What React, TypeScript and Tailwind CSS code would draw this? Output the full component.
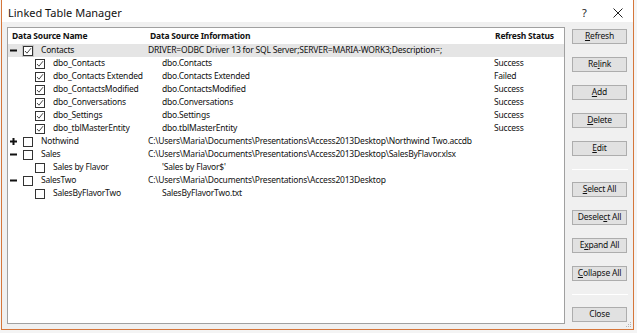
import React from "react";

type Row = {
  name: string;
  level: 0 | 1;
  exp?: "-" | "+";
  checked: boolean;
  info: string;
  status?: string;
  hl?: boolean;
};

const rows: Row[] = [
  { name: "Contacts", level: 0, exp: "-", checked: true, info: "DRIVER=ODBC Driver 13 for SQL Server;SERVER=MARIA-WORK3;Description=;", hl: true },
  { name: "dbo_Contacts", level: 1, checked: true, info: "dbo.Contacts", status: "Success" },
  { name: "dbo_Contacts Extended", level: 1, checked: true, info: "dbo.Contacts Extended", status: "Failed" },
  { name: "dbo_ContactsModified", level: 1, checked: true, info: "dbo.ContactsModified", status: "Success" },
  { name: "dbo_Conversations", level: 1, checked: true, info: "dbo.Conversations", status: "Success" },
  { name: "dbo_Settings", level: 1, checked: true, info: "dbo.Settings", status: "Success" },
  { name: "dbo_tblMasterEntity", level: 1, checked: true, info: "dbo.tblMasterEntity", status: "Success" },
  { name: "Nothwind", level: 0, exp: "+", checked: false, info: "C:\\Users\\Maria\\Documents\\Presentations\\Access2013Desktop\\Northwind Two.accdb" },
  { name: "Sales", level: 0, exp: "-", checked: false, info: "C:\\Users\\Maria\\Documents\\Presentations\\Access2013Desktop\\SalesByFlavor.xlsx" },
  { name: "Sales by Flavor", level: 1, checked: false, info: "'Sales by Flavor$'" },
  { name: "SalesTwo", level: 0, exp: "-", checked: false, info: "C:\\Users\\Maria\\Documents\\Presentations\\Access2013Desktop" },
  { name: "SalesByFlavorTwo", level: 1, checked: false, info: "SalesByFlavorTwo.txt" },
];

function Check({ checked, focus }: { checked: boolean; focus?: boolean }) {
  return (
    <div className={focus ? "w-[12px] h-[12px] shrink-0 flex items-center justify-center bg-[#c8c8c8]" : "w-[12px] h-[12px] shrink-0 flex items-center justify-center"}>
      <div className="w-[10px] h-[10px] border border-[#333333] bg-white flex items-center justify-center">
        {checked && (
          <svg width="8" height="8" viewBox="0 0 8 8">
            <polyline points="1,4 3,6.2 7,1.2" fill="none" stroke="#333333" strokeWidth="0.9" />
          </svg>
        )}
      </div>
    </div>
  );
}

function Expander({ kind }: { kind?: "-" | "+" }) {
  if (!kind) return <div className="w-[13px] shrink-0" />;
  return (
    <div className="w-[13px] h-[13px] shrink-0 flex items-center justify-start pl-[1px]">
      <svg width="7" height="7" viewBox="0 0 7 7">
        <rect x="0" y="2.5" width="7" height="2" fill="#111" />
        {kind === "+" && <rect x="2.5" y="0" width="2" height="7" fill="#111" />}
      </svg>
    </div>
  );
}

function Btn({ label, u }: { label: string; u?: number }) {
  return (
    <div className="w-[55px] h-[15px] border border-[#adadad] bg-[#e1e1e1] flex items-center justify-center text-[8.5px] tracking-[-0.2px] text-[#111] leading-none">
      {u === undefined ? (
        label
      ) : (
        <span>
          {label.slice(0, u)}
          <span className="underline underline-offset-[1px]">{label[u]}</span>
          {label.slice(u + 1)}
        </span>
      )}
    </div>
  );
}

export default function App() {
  return (
    <div
      className="w-[637px] h-[333px] bg-[#f4f4f4] overflow-hidden"
      style={{ fontFamily: '"Noto Sans", "Open Sans", sans-serif' }}
    >
      <div className="relative ml-[1px] w-[633px] h-[330px] border border-t-0 border-[#d5763a] bg-[#f0f0f0] flex flex-col">
        {/* title bar */}
        <div className="h-[22px] bg-white flex items-center pl-[6px] pt-[4px] shrink-0">
          <span className="text-[11px] text-[#111]">Linked Table Manager</span>
          <span className="ml-auto text-[11px] text-[#222] w-[10px]">?</span>
          <div className="ml-[20px] mr-[9px] w-[12px] h-[12px] flex items-center justify-center">
            <svg width="10" height="10" viewBox="0 0 10 10">
              <path d="M0.5 0.5 L9.5 9.5 M9.5 0.5 L0.5 9.5" stroke="#222" strokeWidth="1" />
            </svg>
          </div>
        </div>
        {/* body */}
        <div className="flex flex-1 pt-[5px] pl-[5px] pr-[4px]">
          {/* list */}
          <div className="w-[558px] h-[297px] border border-[#a0a0a0] bg-white text-[8.5px] tracking-[-0.2px] text-[#111] leading-none">
            <div className="grid grid-cols-[140px_346px_1fr] h-[16px] items-center font-bold">
              <div className="pl-[4px]">Data Source Name</div>
              <div className="pl-[2px]">Data Source Information</div>
              <div className="pl-[1px]">Refresh Status</div>
            </div>
            {rows.map((r, i) => (
              <div
                key={i}
                className={
                  r.hl
                    ? "grid grid-cols-[140px_346px_1fr] h-[13px] items-center bg-[#e5e5e5]"
                    : "grid grid-cols-[140px_346px_1fr] h-[13px] items-center"
                }
              >
                <div className="flex items-center pl-[1px] whitespace-nowrap">
                  <Expander kind={r.exp} />
                  <div className={r.level === 1 ? "ml-[12px] shrink-0" : "shrink-0"}>
                    <Check checked={r.checked} focus={r.hl} />
                  </div>
                  <span className="ml-[7px]">{r.name}</span>
                </div>
                <div className={r.level === 1 ? "pl-[14px] whitespace-nowrap" : "whitespace-nowrap"}>{r.info}</div>
                <div>{r.status ?? ""}</div>
              </div>
            ))}
          </div>
          {/* buttons */}
          <div className="ml-[7px] flex flex-col pt-[2px]">
            <Btn label="Refresh" u={0} />
            <div className="h-[13px]" />
            <Btn label="Relink" u={2} />
            <div className="h-[13px]" />
            <Btn label="Add" u={0} />
            <div className="h-[13px]" />
            <Btn label="Delete" u={0} />
            <div className="h-[13px]" />
            <Btn label="Edit" u={0} />
            <div className="h-[13px]" />
            <div className="h-px bg-[#e3e3e3] border-b border-white w-[56px]" />
            <div className="h-[12px]" />
            <Btn label="Select All" u={0} />
            <div className="h-[13px]" />
            <Btn label="Deselect All" u={6} />
            <div className="h-[13px]" />
            <Btn label="Expand All" u={1} />
            <div className="h-[13px]" />
            <Btn label="Collapse All" u={0} />
            <div className="h-[13px]" />
            <div className="h-px bg-[#e3e3e3] border-b border-white w-[56px]" />
            <div className="h-[12px]" />
            <Btn label="Close" />
          </div>
        </div>
        {/* resize grip */}
        <svg className="absolute right-[1px] bottom-[1px]" width="6" height="6" viewBox="0 0 6 6">
          <rect x="4" y="0" width="1" height="1" fill="#b5b5b5" />
          <rect x="2" y="2" width="1" height="1" fill="#b5b5b5" />
          <rect x="4" y="2" width="1" height="1" fill="#b5b5b5" />
          <rect x="0" y="4" width="1" height="1" fill="#b5b5b5" />
          <rect x="2" y="4" width="1" height="1" fill="#b5b5b5" />
          <rect x="4" y="4" width="1" height="1" fill="#b5b5b5" />
        </svg>
      </div>
    </div>
  );
}
